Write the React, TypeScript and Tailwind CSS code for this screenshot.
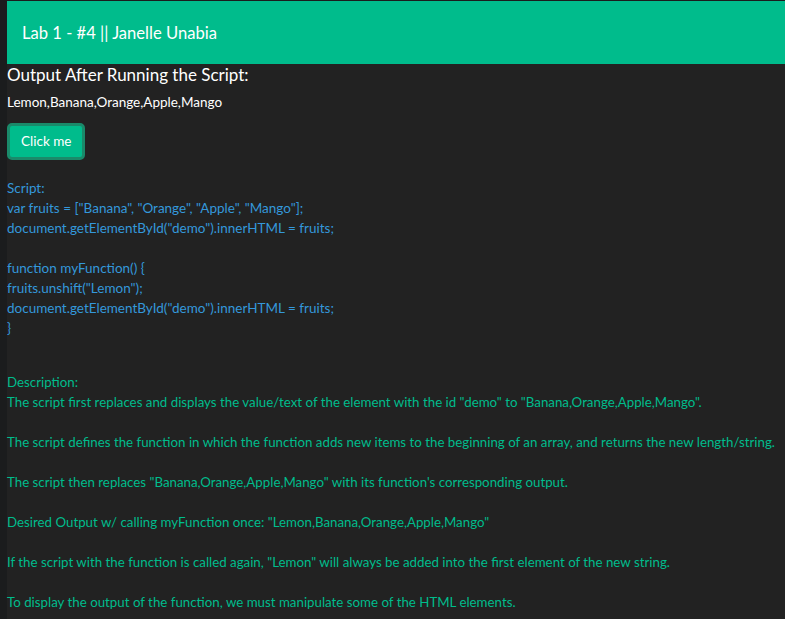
export default function App() {
  const font = { fontFamily: "Lato, 'Open Sans', sans-serif" };
  return (
    <div className="flex min-h-[619px] bg-[#222222] text-white" style={font}>
      <div className="w-[7px] shrink-0 bg-[#1b1c1d]" />
      <div className="flex-1 border-t border-[#1b1c1d]">
        <header className="flex h-[63px] items-center bg-[#00bc8c] px-[15px] pt-[1px]">
          <h1 className="text-[16.6px] leading-none text-white">Lab 1 - #4 || Janelle Unabia</h1>
        </header>

        <h2 className="text-[17px] leading-[20px] mt-[1px]">Output After Running the Script:</h2>
        <p className="mt-[7px] text-[13.5px] leading-[20px]">Lemon,Banana,Orange,Apple,Mango</p>

        <button className="mt-[11px] h-[37px] rounded-[5px] border-[3px] border-[#1a8a6a] bg-[#00bc8c] px-[11px] text-[13.5px] text-white">
          Click me
        </button>

        <div className="mt-[18px] text-[13.5px] leading-[20px] text-[#3498db]">
          <p>Script:</p>
          <p>var fruits = ["Banana", "Orange", "Apple", "Mango"];</p>
          <p>document.getElementById("demo").innerHTML = fruits;</p>
          <p>&nbsp;</p>
          <p>function myFunction() {"{"}</p>
          <p>fruits.unshift("Lemon");</p>
          <p>document.getElementById("demo").innerHTML = fruits;</p>
          <p>{"}"}</p>
        </div>

        <div className="mt-[34px] text-[13.3px] leading-[20px] text-[#00bc8c]">
          <p>Description:</p>
          <p>The script first replaces and displays the value/text of the element with the id "demo" to "Banana,Orange,Apple,Mango".</p>
          <p>&nbsp;</p>
          <p>The script defines the function in which the function adds new items to the beginning of an array, and returns the new length/string.</p>
          <p>&nbsp;</p>
          <p>The script then replaces "Banana,Orange,Apple,Mango" with its function's corresponding output.</p>
          <p>&nbsp;</p>
          <p>Desired Output w/ calling myFunction once: "Lemon,Banana,Orange,Apple,Mango"</p>
          <p>&nbsp;</p>
          <p>If the script with the function is called again, "Lemon" will always be added into the first element of the new string.</p>
          <p>&nbsp;</p>
          <p>To display the output of the function, we must manipulate some of the HTML elements.</p>
        </div>
      </div>
    </div>
  );
}
